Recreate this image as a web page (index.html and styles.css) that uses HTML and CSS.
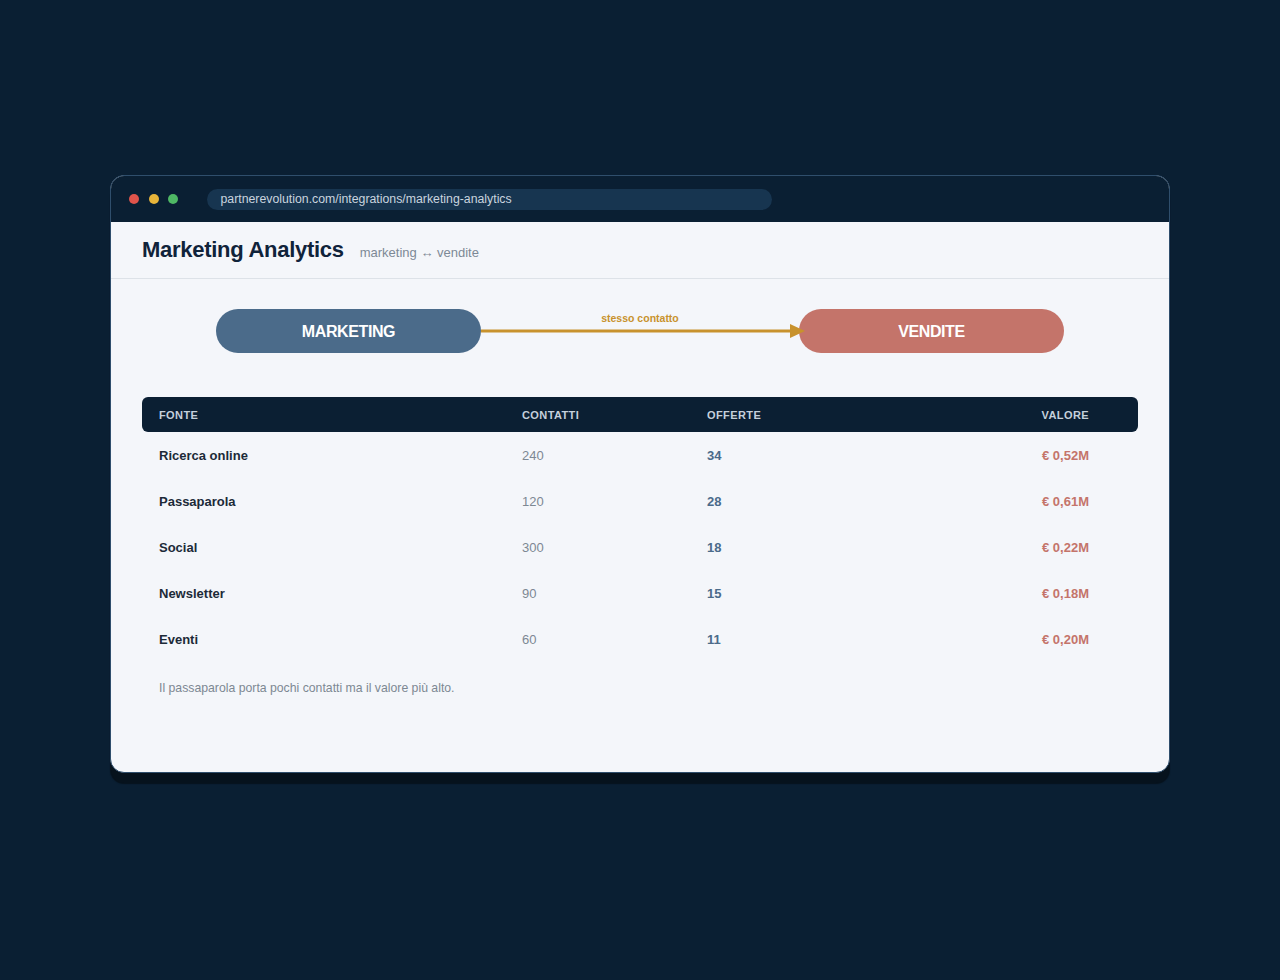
FILE: index.html
```html
<!DOCTYPE html>
<html>
<head>
  <title>Marketing Analytics</title>
  <link rel="stylesheet" href="styles.css">
</head>
<body>
  <div class="stage">
    <div class="window">
      <div class="titlebar">
        <span class="dot red"></span>
        <span class="dot yellow"></span>
        <span class="dot green"></span>
        <div class="url">partnerevolution.com/integrations/marketing-analytics</div>
      </div>

      <div class="content">
        <div class="page-head">
          <h1>Marketing Analytics</h1>
          <span class="subtitle">marketing &harr; vendite</span>
        </div>

        <div class="flow">
          <div class="pill pill-marketing">MARKETING</div>
          <div class="link">
            <span class="link-label">stesso contatto</span>
            <svg class="link-arrow" width="320" height="16" viewBox="0 0 320 16">
              <line x1="0" y1="8" x2="310" y2="8" stroke="#c8922d" stroke-width="3"/>
              <polygon points="309,1 324,8 309,15" fill="#c8922d"/>
            </svg>
          </div>
          <div class="pill pill-vendite">VENDITE</div>
        </div>

        <div class="table">
          <div class="row head">
            <span>FONTE</span>
            <span>CONTATTI</span>
            <span>OFFERTE</span>
            <span class="right">VALORE</span>
          </div>
          <div class="row">
            <span class="name">Ricerca online</span>
            <span class="contacts">240</span>
            <span class="deals">34</span>
            <span class="value">&euro; 0,52M</span>
          </div>
          <div class="row">
            <span class="name">Passaparola</span>
            <span class="contacts">120</span>
            <span class="deals">28</span>
            <span class="value">&euro; 0,61M</span>
          </div>
          <div class="row">
            <span class="name">Social</span>
            <span class="contacts">300</span>
            <span class="deals">18</span>
            <span class="value">&euro; 0,22M</span>
          </div>
          <div class="row">
            <span class="name">Newsletter</span>
            <span class="contacts">90</span>
            <span class="deals">15</span>
            <span class="value">&euro; 0,18M</span>
          </div>
          <div class="row">
            <span class="name">Eventi</span>
            <span class="contacts">60</span>
            <span class="deals">11</span>
            <span class="value">&euro; 0,20M</span>
          </div>
        </div>

        <p class="note">Il passaparola porta pochi contatti ma il valore più alto.</p>
      </div>
    </div>
  </div>
</body>
</html>
```

FILE: styles.css
```css
body {
  margin: 0;
  min-height: 980px;
  background-color: #0a1f33;
  font-family: "Liberation Sans", Arial, sans-serif;
}

.stage {
  display: flex;
  justify-content: center;
  padding: 175px 0 120px;
}

.window {
  width: 1058px;
  border: 1px solid #2f4e6c;
  border-radius: 14px;
  overflow: hidden;
  background-color: #f4f6fa;
  box-shadow: 0 11px 1px #06121d;
}

.titlebar {
  display: flex;
  align-items: center;
  height: 46px;
  padding-left: 18px;
  background-color: #0a1f33;
}

.dot {
  width: 10px;
  height: 10px;
  border-radius: 50%;
  margin-right: 9.5px;
}

.red { background-color: #e0544b; }
.yellow { background-color: #e8b53a; }
.green { background-color: #4fb865; }

.url {
  margin-left: 19px;
  width: 551px;
  height: 21px;
  line-height: 21px;
  padding-left: 14px;
  border-radius: 11px;
  background-color: #173550;
  color: #c9d4df;
  font-size: 12.3px;
}

.page-head {
  display: flex;
  align-items: baseline;
  gap: 16px;
  height: 56px;
  padding: 0 31px;
  border-bottom: 1px solid #dde2e8;
}

h1 {
  margin: 0;
  line-height: 56px;
  font-size: 22px;
  letter-spacing: -0.28px;
  color: #10233a;
}

.subtitle {
  font-size: 13px;
  color: #7d8996;
}

.flow {
  display: flex;
  justify-content: center;
  align-items: center;
  padding: 30px 0 44px;
}

.pill {
  width: 265px;
  height: 44px;
  line-height: 46px;
  border-radius: 22px;
  text-align: center;
  color: #ffffff;
  font-weight: bold;
  font-size: 16px;
  letter-spacing: -0.4px;
}

.pill-marketing { background-color: #4b6b8a; }
.pill-vendite { background-color: #c4746a; }

.link {
  position: relative;
  width: 318px;
  height: 16px;
}

.link-arrow {
  display: block;
  overflow: visible;
}

.link-label {
  position: absolute;
  left: 0;
  right: 0;
  top: -11px;
  text-align: center;
  font-size: 10.5px;
  font-weight: bold;
  color: #c8922d;
}

.table {
  margin: 0 31px;
}

.row {
  display: grid;
  grid-template-columns: 363px 185px 1fr 110px;
  align-items: center;
  height: 46px;
  padding: 0 49px 0 17px;
  font-size: 13px;
}

.row.head {
  height: 35px;
  line-height: 37px;
  border-radius: 6px;
  background-color: #0b1f33;
  color: #c5d0dc;
  font-size: 11px;
  font-weight: bold;
  letter-spacing: 0.4px;
}

.right,
.value {
  text-align: right;
}

.name {
  font-weight: bold;
  color: #1c2a38;
}

.contacts {
  color: #7d8893;
}

.deals {
  font-weight: bold;
  color: #4b6b8a;
}

.value {
  font-weight: bold;
  color: #c4746a;
}

.note {
  margin: 19px 0 77px 48px;
  font-size: 12.25px;
  color: #7d8893;
}
```
